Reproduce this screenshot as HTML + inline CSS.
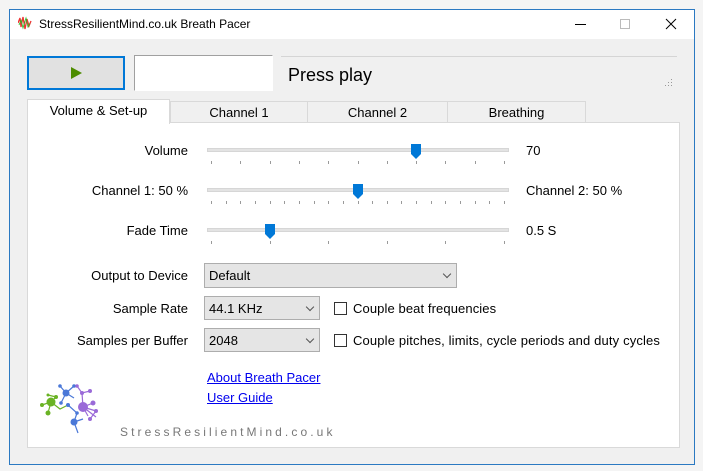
<!DOCTYPE html>
<html><head><meta charset="utf-8"><style>
*{box-sizing:border-box;margin:0;padding:0}
body{width:703px;height:471px;background:#f4f4f4;font-family:"Liberation Sans",sans-serif;font-size:13px;color:#000;position:relative;overflow:hidden}
.a{position:absolute}
.win{left:9px;top:9px;width:686px;height:456px;border:1px solid #2b79c2;background:#f0f0f0}
.title{left:10px;top:10px;width:684px;height:29px;background:#fff}
.lbl{position:absolute;text-align:right;width:188px;left:0}
.track{position:absolute;left:207px;width:302px;height:4px;background:#e3e3e3;border:1px solid #d6d6d6}
.tick{position:absolute;width:1px;height:3px;background:#9a9a9a}
.thumb{position:absolute;width:10px;height:15px}
.combo{position:absolute;background:#e5e5e5;border:1px solid #adadad;padding:4px 4px 3px;font-size:13px}
.combo:after{content:"";position:absolute;right:6px;top:7px;width:5px;height:5px;border-right:1px solid #555;border-bottom:1px solid #555;transform:rotate(45deg)}
.cb{position:absolute;width:13px;height:13px;border:1px solid #333;background:#fff}
.tab{position:absolute;top:101px;height:22px;border:1px solid #d9d9d9;background:#f0f0f0;text-align:center;line-height:21px;font-size:13px}
a{color:#0000ee;text-decoration:underline}
</style></head><body>
<div class="a win"></div>
<div class="a title"></div>
<svg class="a" style="left:18px;top:15px" width="14" height="16" viewBox="0 0 14 16"><polyline points="0,8 2,3 3,12 5,2 7,14 9,4 11,11 13,6" fill="none" stroke="#e33" stroke-width="1.3"/><polyline points="1,10 3,5 5,13 8,3 10,12 12,8" fill="none" stroke="#2b2" stroke-width="0.8"/></svg>
<div class="a" style="left:39px;top:17px;font-size:12px">StressResilientMind.co.uk Breath Pacer</div>
<div class="a" style="left:575px;top:24px;width:11px;height:1px;background:#000"></div>
<div class="a" style="left:620px;top:19px;width:10px;height:10px;border:1px solid #bbb"></div>
<svg class="a" style="left:665px;top:18px" width="12" height="12"><path d="M1 1L11 11M11 1L1 11" stroke="#000" stroke-width="1"/></svg>

<div class="a" style="left:27px;top:56px;width:98px;height:34px;background:#e1e1e1;border:2px solid #0078d7"></div>
<div class="a" style="left:71px;top:67px;width:0;height:0;border-left:11px solid #4d8c00;border-top:6px solid transparent;border-bottom:6px solid transparent"></div>
<div class="a" style="left:134px;top:55px;width:139px;height:36px;background:#fff;border:1px solid #a0a0a0;border-right-color:#fff;border-bottom-color:#fff"></div>
<div class="a" style="left:281px;top:56px;width:396px;height:1px;background:#d5d5d5"></div>
<div class="a" style="left:288px;top:65px;font-size:18px">Press play</div>
<svg class="a" style="left:664px;top:78px" width="10" height="10"><g fill="#999"><rect x="7" y="1" width="1" height="1"/><rect x="4" y="4" width="1" height="1"/><rect x="7" y="4" width="1" height="1"/><rect x="1" y="7" width="1" height="1"/><rect x="4" y="7" width="1" height="1"/><rect x="7" y="7" width="1" height="1"/></g></svg>

<div class="a" style="left:27px;top:122px;width:653px;height:326px;background:#fff;border:1px solid #d9d9d9"></div>
<div class="tab" style="left:170px;width:138px">Channel 1</div>
<div class="tab" style="left:307px;width:141px">Channel 2</div>
<div class="tab" style="left:447px;width:139px">Breathing</div>
<div class="tab" style="left:27px;top:99px;width:143px;height:25px;background:#fff;border-bottom:none;line-height:22px">Volume &amp; Set-up</div>

<div class="lbl" style="top:143px">Volume</div>
<div class="lbl" style="top:183px">Channel 1: 50 %</div>
<div class="lbl" style="top:223px">Fade Time</div>
<div class="a" style="left:526px;top:143px">70</div>
<div class="a" style="left:526px;top:183px">Channel 2: 50 %</div>
<div class="a" style="left:526px;top:223px">0.5 S</div>
<div class="track" style="top:148px"></div>
<div class="track" style="top:188px"></div>
<div class="track" style="top:228px"></div>
<div id="ticks"></div>
<svg class="a thumb" style="left:411px;top:144px" viewBox="0 0 10 15"><path d="M0 0H10V10L5 15L0 10Z" fill="#0078d7"/></svg>
<svg class="a thumb" style="left:353px;top:184px" viewBox="0 0 10 15"><path d="M0 0H10V10L5 15L0 10Z" fill="#0078d7"/></svg>
<svg class="a thumb" style="left:265px;top:224px" viewBox="0 0 10 15"><path d="M0 0H10V10L5 15L0 10Z" fill="#0078d7"/></svg>

<div class="lbl" style="top:268px">Output to Device</div>
<div class="lbl" style="top:301px">Sample Rate</div>
<div class="lbl" style="top:333px">Samples per Buffer</div>
<div class="combo" style="left:204px;top:263px;width:253px;height:25px">Default</div>
<div class="combo" style="left:204px;top:296px;width:116px;height:24px">44.1 KHz</div>
<div class="combo" style="left:204px;top:328px;width:116px;height:24px">2048</div>
<div class="cb" style="left:334px;top:302px"></div>
<div class="a" style="left:353px;top:301px;letter-spacing:0.1px">Couple beat frequencies</div>
<div class="cb" style="left:334px;top:334px"></div>
<div class="a" style="left:353px;top:333px;letter-spacing:0.15px">Couple pitches, limits, cycle periods and duty cycles</div>
<a class="a" style="left:207px;top:370px">About Breath Pacer</a>
<a class="a" style="left:207px;top:390px">User Guide</a>

<svg class="a" style="left:38px;top:383px" width="64" height="54" viewBox="0 0 64 54">
<g stroke-width="1.2">
<path d="M4 22L13 19L18 14L10 12M13 19L10 30M13 19L22 26L30 22" stroke="#6ab324" fill="none"/>
<path d="M22 3L28 10L23 20M28 10L36 3M28 10L36 15M30 22L39 30L36 39L40 50M36 39L45 36" stroke="#4a78d8" fill="none"/>
<path d="M39 3L44 10L52 8M44 10L45 24L55 20M45 24L58 28L52 36M45 24L50 33M45 24L58 34" stroke="#9a6ad8" fill="none"/>
</g>
<g fill="#6ab324"><circle cx="13" cy="19" r="4.5"/><circle cx="4" cy="22" r="2"/><circle cx="10" cy="30" r="2.5"/><circle cx="18" cy="14" r="2"/><circle cx="10" cy="12" r="1.5"/></g>
<g fill="#4a78d8"><circle cx="28" cy="10" r="3.5"/><circle cx="22" cy="3" r="1.8"/><circle cx="36" cy="3" r="1.8"/><circle cx="23" cy="20" r="1.8"/><circle cx="30" cy="22" r="2"/><circle cx="36" cy="39" r="3.5"/><circle cx="39" cy="30" r="1.8"/></g>
<g fill="#9a6ad8"><circle cx="45" cy="24" r="5"/><circle cx="44" cy="10" r="2"/><circle cx="52" cy="8" r="2"/><circle cx="55" cy="20" r="2.5"/><circle cx="58" cy="28" r="2"/><circle cx="52" cy="36" r="2"/><circle cx="39" cy="3" r="1.8"/></g>
</svg>
<div class="a" style="left:120px;top:425px;font-size:12px;color:#777;letter-spacing:3.1px">StressResilientMind.co.uk</div>
<script>
var t=document.getElementById('ticks'),h='';
function row(y,n){for(var i=0;i<n;i++){var x=Math.round(211+i*293/(n-1));h+='<div class="tick" style="left:'+x+'px;top:'+y+'px"></div>';}}
row(161,11);row(201,21);row(241,6);t.innerHTML=h;
</script>
</body></html>
